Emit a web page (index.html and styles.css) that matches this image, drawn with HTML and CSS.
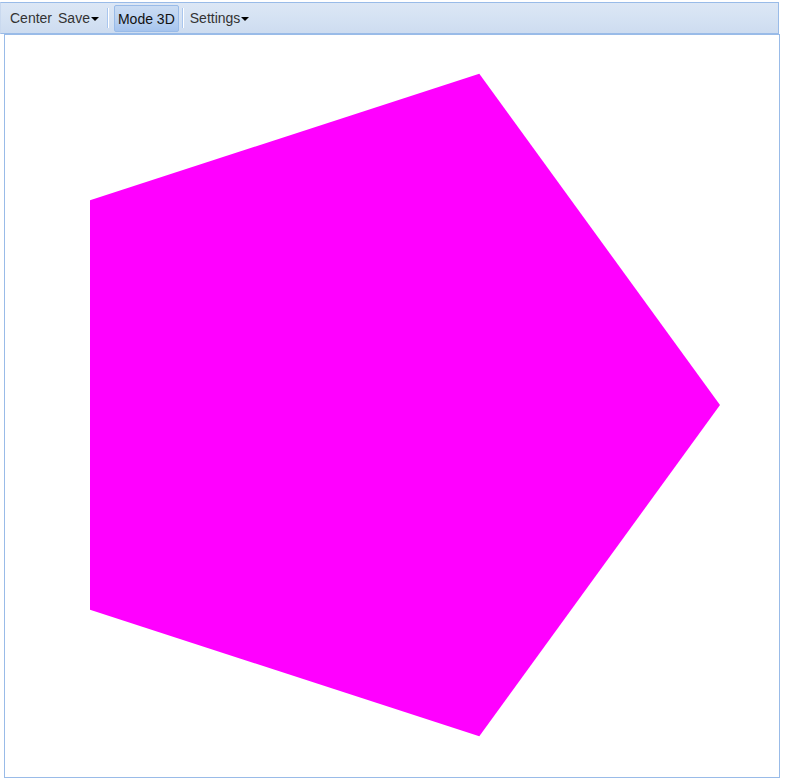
FILE: index.html
```html
<!DOCTYPE html>
<html>
<head>
<meta charset="utf-8">
<link rel="stylesheet" href="styles.css">
</head>
<body>
<div class="toolbar">
  <span class="btn">Center</span>
  <span class="btn menu">Save<span class="arrow"></span></span>
  <span class="sep sep-a"></span>
  <span class="btn pressed">Mode 3D</span>
  <span class="sep sep-b"></span>
  <span class="btn menu">Settings<span class="arrow"></span></span>
</div>
<div class="canvas">
  <svg class="scene" width="774" height="742" viewBox="0 0 774 742">
    <polygon points="715,370 474.3,38.8 85,165.3 85,574.7 474.3,701.2" fill="#ff00ff"/>
  </svg>
</div>
</body>
</html>
```
FILE: styles.css
```css
html, body {
  margin: 0;
  padding: 0;
  background: #ffffff;
}
body {
  font-family: "Liberation Sans", Arial, sans-serif;
  font-size: 14px;
  color: #333;
}
.toolbar {
  box-sizing: border-box;
  margin: 2px 6px 0 0;
  height: 32px;
  border: 1px solid #99bbe8;
  border-left-color: #c9d9ef;
  background: linear-gradient(to bottom, #dce7f5 0%, #d5e2f3 50%, #cddcf0 100%);
  display: flex;
  align-items: center;
  padding: 0 0 0 6px;
}
.btn {
  display: flex;
  align-items: center;
  height: 27px;
  box-sizing: border-box;
  padding: 0 3px;
  white-space: nowrap;
}
.menu .arrow {
  display: inline-block;
  width: 0;
  height: 0;
  border-left: 4px solid transparent;
  border-right: 4px solid transparent;
  border-top: 4px solid #000;
  margin-left: 1px;
  margin-top: 1px;
}
.sep {
  width: 0;
  height: 20px;
  border-left: 1px solid #a9c6ee;
  border-right: 1px solid #ffffff;
}
.sep-a {
  margin: 0 5px;
}
.sep-b {
  margin: 0 3px 0 3px;
}
.pressed {
  align-self: flex-start;
  margin-top: 2px;
  border: 1px solid #99bbe8;
  border-radius: 2px;
  background: linear-gradient(to bottom, #cadcf3 0%, #bcd3f1 50%, #a6c4ee 100%);
  color: #111;
  padding: 0 3px;
}
.canvas {
  box-sizing: border-box;
  margin: 0 5px 0 4px;
  height: 744px;
  border: 1px solid #99bbe8;
  background: #ffffff;
  display: flex;
}
.scene {
  display: block;
}
```
